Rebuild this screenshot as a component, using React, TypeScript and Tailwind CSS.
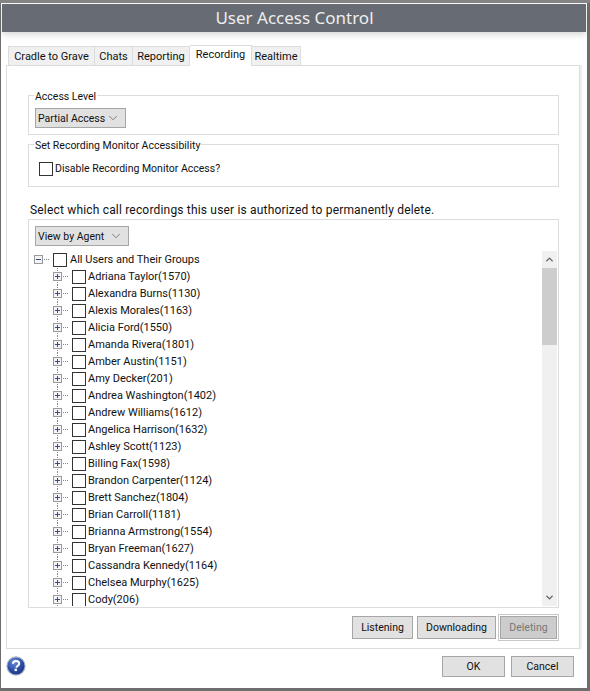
import { ChevronDown, ChevronUp } from "lucide-react";

const agents = [
  "Adriana Taylor(1570)",
  "Alexandra Burns(1130)",
  "Alexis Morales(1163)",
  "Alicia Ford(1550)",
  "Amanda Rivera(1801)",
  "Amber Austin(1151)",
  "Amy Decker(201)",
  "Andrea Washington(1402)",
  "Andrew Williams(1612)",
  "Angelica Harrison(1632)",
  "Ashley Scott(1123)",
  "Billing Fax(1598)",
  "Brandon Carpenter(1124)",
  "Brett Sanchez(1804)",
  "Brian Carroll(1181)",
  "Brianna Armstrong(1554)",
  "Bryan Freeman(1627)",
  "Cassandra Kennedy(1164)",
  "Chelsea Murphy(1625)",
  "Cody(206)",
];

function Checkbox() {
  return <span className="h-[14px] w-[14px] shrink-0 border border-[#333333] bg-white" />;
}

function Expander({ open, trunk }: { open?: boolean; trunk?: boolean }) {
  return (
    <svg width="19" height="17" viewBox="0 0 19 17" className="shrink-0">
      {trunk && <line x1="4.5" y1="0" x2="4.5" y2="17" stroke="#888888" strokeDasharray="1 1" />}
      <line x1="10" y1="8.5" x2="15" y2="8.5" stroke="#888888" strokeDasharray="1 1" />
      <rect x="0.5" y="4.5" width="8" height="8" fill="#f4f4f4" stroke="#9a9a9a" />
      <line x1="2" y1="8.5" x2="7" y2="8.5" stroke="#3b4a8c" />
      {!open && <line x1="4.5" y1="6" x2="4.5" y2="11" stroke="#3b4a8c" />}
    </svg>
  );
}

function Dropdown({ label, width }: { label: string; width: string }) {
  return (
    <div className={`flex h-5 items-center justify-between whitespace-nowrap border border-[#a6a6a6] bg-[#e1e1e1] pl-[2px] pr-[5px] text-[10.5px] ${width}`}>
      <span>{label}</span>
      <ChevronDown size={14} strokeWidth={1.2} className="shrink-0 text-[#555555]" />
    </div>
  );
}

function GroupBox({ title, className, children }: { title: string; className: string; children: React.ReactNode }) {
  return (
    <div className={`relative border border-[#dcdcdc] text-[10.5px] ${className}`}>
      <span className="absolute -top-[7px] left-[5px] bg-white px-[1px] leading-[15px]">{title}</span>
      {children}
    </div>
  );
}

function Tab({ label, width }: { label: string; width: string }) {
  return (
    <div className={`flex h-[19px] items-center justify-center border border-b-0 border-l-0 border-[#dcdcdc] bg-[#f0f0f0] first:border-l ${width}`}>
      {label}
    </div>
  );
}

export default function App() {
  return (
    <div className="h-[691px] w-[590px] overflow-hidden bg-[#6e6e6e] font-['Roboto',sans-serif] text-[11px] leading-[17px] text-[#111111]">
      <div className="h-[3px] bg-[#858585]" />
      <div className="ml-[1px] h-[685px] w-[586px] border border-white bg-white">
        <div className="flex h-[28px] items-center justify-center bg-[#676b73] pb-[1px] pl-[1px] font-['Noto_Sans',sans-serif] text-[17px] text-[#eeeeee] shadow-[0_3px_6px_rgba(0,0,0,0.15)]">
          User Access Control
        </div>

        <div className="ml-[4px] mt-[13px] flex h-[20px] items-end pl-[2px]">
          <Tab label="Cradle to Grave" width="w-[87px]" />
          <Tab label="Chats" width="w-[38px]" />
          <Tab label="Reporting" width="w-[57px]" />
          <div className="relative z-10 -mb-[1px] flex h-[21px] w-[62px] justify-center border border-b-0 border-l-0 border-[#dcdcdc] bg-white">Recording</div>
          <Tab label="Realtime" width="w-[49px]" />
        </div>

        <div className="ml-[4px] h-[584px] w-[574px] border border-[#dcdcdc] px-[21px] pt-[29px] shadow-[2px_0_0_#eeeeee]">
          <GroupBox title="Access Level" className="h-[40px] w-[531px] pl-[6px] pt-[12px]">
            <Dropdown label="Partial Access" width="w-[91px]" />
          </GroupBox>
          <GroupBox title="Set Recording Monitor Accessibility" className="mt-[9px] h-[43px] w-[531px] pl-[10px] pt-[15px]">
            <label className="flex items-center gap-[2px]">
              <Checkbox />
              <span>Disable Recording Monitor Access?</span>
            </label>
          </GroupBox>

          <p className="ml-[2px] mt-[15px] h-[17px] text-[12px] tracking-[0.18px]">Select which call recordings this user is authorized to permanently delete.</p>

          <div className="relative h-[389px] w-[531px] border border-[#dcdcdc] pl-[6px] pt-[6px]">
            <Dropdown label="View by Agent" width="w-[94px]" />
            <div className="ml-[-1px] mt-[5px] h-[355px] overflow-hidden">
              <div className="flex h-[17px] items-center">
                <Expander open />
                <Checkbox />
                <span className="ml-[3px]">All Users and Their Groups</span>
              </div>
              {agents.map((name) => (
                <div key={name} className="ml-[19px] flex h-[17px] items-center">
                  <Expander trunk />
                  <Checkbox />
                  <span className="ml-[2px]">{name}</span>
                </div>
              ))}
            </div>
            {/* scrollbar sits over the tree */}
            <div className="absolute right-[1px] top-[31px] flex h-[355px] w-[15px] flex-col bg-[#f0f0f0]">
              <div className="flex h-[17px] items-center justify-center">
                <ChevronUp size={11} strokeWidth={3} className="text-[#606060]" />
              </div>
              <div className="h-[77px] bg-[#cdcdcd]" />
              <div className="flex-1" />
              <div className="flex h-[17px] items-center justify-center">
                <ChevronDown size={11} strokeWidth={3} className="text-[#606060]" />
              </div>
            </div>
          </div>

          <div className="mt-[6px] flex w-[531px] items-center justify-end text-[10.5px]">
            <button className="h-[23px] w-[61px] border border-[#a6a6a6] bg-[#e1e1e1]">Listening</button>
            <button className="ml-[4px] h-[23px] w-[79px] border border-[#a6a6a6] bg-[#e1e1e1]">Downloading</button>
            <div className="ml-[2px] border border-[#c8c8c8] bg-white p-[1px]">
              <button className="h-[23px] w-[57px] border border-[#a6a6a6] bg-[#cccccc] text-[#777777]">Deleting</button>
            </div>
          </div>
        </div>

        <div className="ml-[4px] mt-[7px] flex items-start justify-between pr-[12px] text-[10.5px]">
          <svg width="20" height="20" viewBox="0 0 22 22">
            <defs>
              <radialGradient id="help" cx="40%" cy="30%" r="75%">
                <stop offset="0%" stopColor="#6c8fd8" />
                <stop offset="60%" stopColor="#2a4ba6" />
                <stop offset="100%" stopColor="#1c3480" />
              </radialGradient>
            </defs>
            <circle cx="11" cy="11" r="10" fill="url(#help)" stroke="#a9b0c2" strokeWidth="1.2" />
            <path d="M7.6 8.4c0-2 1.5-3 3.5-3s3.4 1.1 3.4 2.8c0 2.6-3 2.5-3 4.6" fill="none" stroke="#ffffff" strokeWidth="2.2" />
            <rect x="9.4" y="14" width="2.6" height="2.6" fill="#ffffff" />
          </svg>
          <div className="flex gap-[6px]">
            <button className="h-[21px] w-[63px] border border-[#a6a6a6] bg-[#e1e1e1]">OK</button>
            <button className="h-[21px] w-[63px] border border-[#a6a6a6] bg-[#e1e1e1]">Cancel</button>
          </div>
        </div>
      </div>
    </div>
  );
}
